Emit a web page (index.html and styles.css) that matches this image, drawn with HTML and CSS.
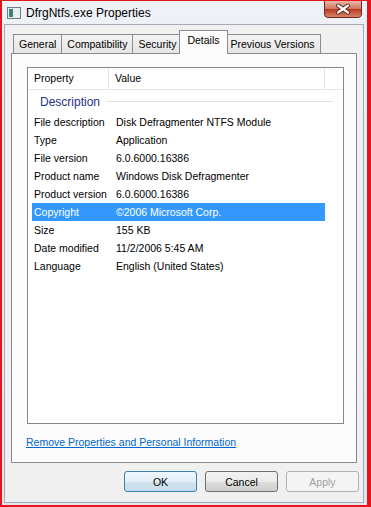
FILE: index.html
```html
<!DOCTYPE html>
<html>
<head>
    <title>DfrgNtfs.exe Properties</title>
    <link rel="stylesheet" href="styles.css">
</head>
<body>
    <div class="window">
        <div class="titlebar">
            <svg class="app-icon" width="14" height="12" viewBox="0 0 14 12">
                <rect x="0.5" y="0.5" width="13" height="11" fill="#e9eef1" stroke="#6f7a82"/>
                <rect x="2" y="2" width="4" height="8" fill="#3f807b"/>
            </svg>
            <span class="title">DfrgNtfs.exe Properties</span>
            <svg class="close-btn" width="38" height="17" viewBox="0 0 38 17">
                <defs>
                    <linearGradient id="closeGrad" x1="0" y1="0" x2="0" y2="1">
                        <stop offset="0" stop-color="#eab7ab"/>
                        <stop offset="0.45" stop-color="#d37a64"/>
                        <stop offset="0.5" stop-color="#b9381f"/>
                        <stop offset="1" stop-color="#d98a70"/>
                    </linearGradient>
                </defs>
                <path d="M0.5 0 V13 Q0.5 16.5 4 16.5 H34 Q37.5 16.5 37.5 13 V0" fill="url(#closeGrad)" stroke="#70291c"/>
                <path d="M14 4.5 L24 11.5 M24 4.5 L14 11.5" stroke="#5b2116" stroke-width="4" stroke-linecap="round"/>
                <path d="M14 4.5 L24 11.5 M24 4.5 L14 11.5" stroke="#ffffff" stroke-width="2.2" stroke-linecap="round"/>
            </svg>
        </div>

        <div class="client">
            <div class="tabs">
                <div class="tab">General</div>
                <div class="tab">Compatibility</div>
                <div class="tab">Security</div>
                <div class="tab active">Details</div>
                <div class="tab">Previous Versions</div>
            </div>

            <div class="tab-page">
                <div class="list">
                    <div class="list-header">
                        <div class="col-prop">Property</div>
                        <div class="col-value">Value</div>
                        <div class="col-rest"></div>
                    </div>
                    <div class="group">
                        <span>Description</span>
                        <div class="group-line"></div>
                    </div>
                    <div class="row"><span class="prop">File description</span><span>Disk Defragmenter NTFS Module</span></div>
                    <div class="row"><span class="prop">Type</span><span>Application</span></div>
                    <div class="row"><span class="prop">File version</span><span>6.0.6000.16386</span></div>
                    <div class="row"><span class="prop">Product name</span><span>Windows Disk Defragmenter</span></div>
                    <div class="row"><span class="prop">Product version</span><span>6.0.6000.16386</span></div>
                    <div class="row selected"><span class="prop">Copyright</span><span>&copy;2006 Microsoft Corp.</span></div>
                    <div class="row"><span class="prop">Size</span><span>155 KB</span></div>
                    <div class="row"><span class="prop">Date modified</span><span>11/2/2006 5:45 AM</span></div>
                    <div class="row"><span class="prop">Language</span><span>English (United States)</span></div>
                </div>
                <a class="remove-link" href="#">Remove Properties and Personal Information</a>
            </div>

            <div class="buttons">
                <button type="button" class="btn default">OK</button>
                <button type="button" class="btn">Cancel</button>
                <button type="button" class="btn" disabled>Apply</button>
            </div>
        </div>
    </div>
</body>
</html>
```

FILE: styles.css
```css
body {
    margin: 0;
    background: #e8121a;
    font-family: "Liberation Sans", Arial, sans-serif;
    font-size: 10.5px;
    color: #000;
}

.window {
    margin: 1px 4px 2px 2px;
    height: 504px;
    display: flex;
    flex-direction: column;
    background: linear-gradient(#eef1f5, #e2e7ed);
}

/* Title bar */
.titlebar {
    height: 23px;
    display: flex;
    align-items: center;
    padding-left: 5px;
}

.app-icon {
    margin-right: 5px;
    margin-top: 1px;
}

.title {
    font-size: 12px;
    flex: 1;
}

.close-btn {
    align-self: flex-start;
    margin-right: 5px;
}

/* Dialog body */
.client {
    flex: 1;
    margin: 0 3px 2px 2px;
    background: #f0f0f0;
    border: 1px solid #a3acb6;
    padding: 5px 0 10px 0;
    display: flex;
    flex-direction: column;
}

.tabs {
    display: flex;
    align-items: flex-end;
    padding-left: 8px;
    margin-bottom: -1px;
}

.tab {
    height: 19px;
    line-height: 18px;
    padding: 0 5px;
    border: 1px solid #898c95;
    border-bottom: none;
    background: linear-gradient(#f4f4f4, #e4e4e4);
    margin-left: -1px;
}

.tab:first-child {
    margin-left: 0;
}

.tab.active {
    height: 23px;
    line-height: 19px;
    background: #fcfcfc;
    padding: 0 7px;
    margin: 0 -2px 0 -3px;
    position: relative;
    z-index: 1;
}

.tab-page {
    flex: 1;
    margin: 0 6px;
    background: #fcfcfc;
    border: 1px solid #898c95;
    padding: 13px 12px 0 15px;
}

/* List view */
.list {
    height: 355px;
    border: 1px solid #828790;
    background: #fff;
}

.list-header {
    display: flex;
    height: 21px;
    line-height: 21px;
    border-bottom: 1px solid #e5e5e5;
}

.col-prop {
    width: 74px;
    padding-left: 6px;
    border-right: 1px solid #e3e3e3;
}

.col-value {
    width: 209px;
    padding-left: 6px;
    border-right: 1px solid #e3e3e3;
}

.group {
    height: 23px;
    display: flex;
    align-items: center;
    padding-left: 12px;
    margin-right: 10px;
    color: #1e3287;
    font-size: 12px;
}

.group-line {
    flex: 1;
    height: 1px;
    background: #e2e2e2;
    margin-left: 6px;
}

.row {
    display: flex;
    height: 18px;
    line-height: 18px;
    margin-left: 4px;
    width: 293px;
    padding-left: 2px;
    box-sizing: border-box;
}

.row .prop {
    width: 82px;
}

.row.selected {
    background: #3399ff;
    color: #fff;
}

.remove-link {
    display: inline-block;
    margin-top: 12px;
    margin-left: -1px;
    color: #0066cc;
}

/* Buttons */
.buttons {
    display: flex;
    justify-content: flex-end;
    gap: 8px;
    margin-top: 8px;
    padding-right: 4px;
}

.btn {
    width: 73px;
    height: 21px;
    font-family: "Liberation Sans", Arial, sans-serif;
    font-size: 10.5px;
    color: #000;
    border: 1px solid #707070;
    border-radius: 3px;
    background: linear-gradient(#f2f2f2 0%, #ebebeb 50%, #dddddd 51%, #cfcfcf 100%);
}

.btn.default {
    border-color: #3c7fb1;
    background: linear-gradient(#f0f7fc 0%, #e2eef7 50%, #d3e3ef 51%, #c6dcec 100%);
}

.btn:disabled {
    color: #a0a0a0;
    border-color: #adb2b5;
    background: #f4f4f4;
}
```
